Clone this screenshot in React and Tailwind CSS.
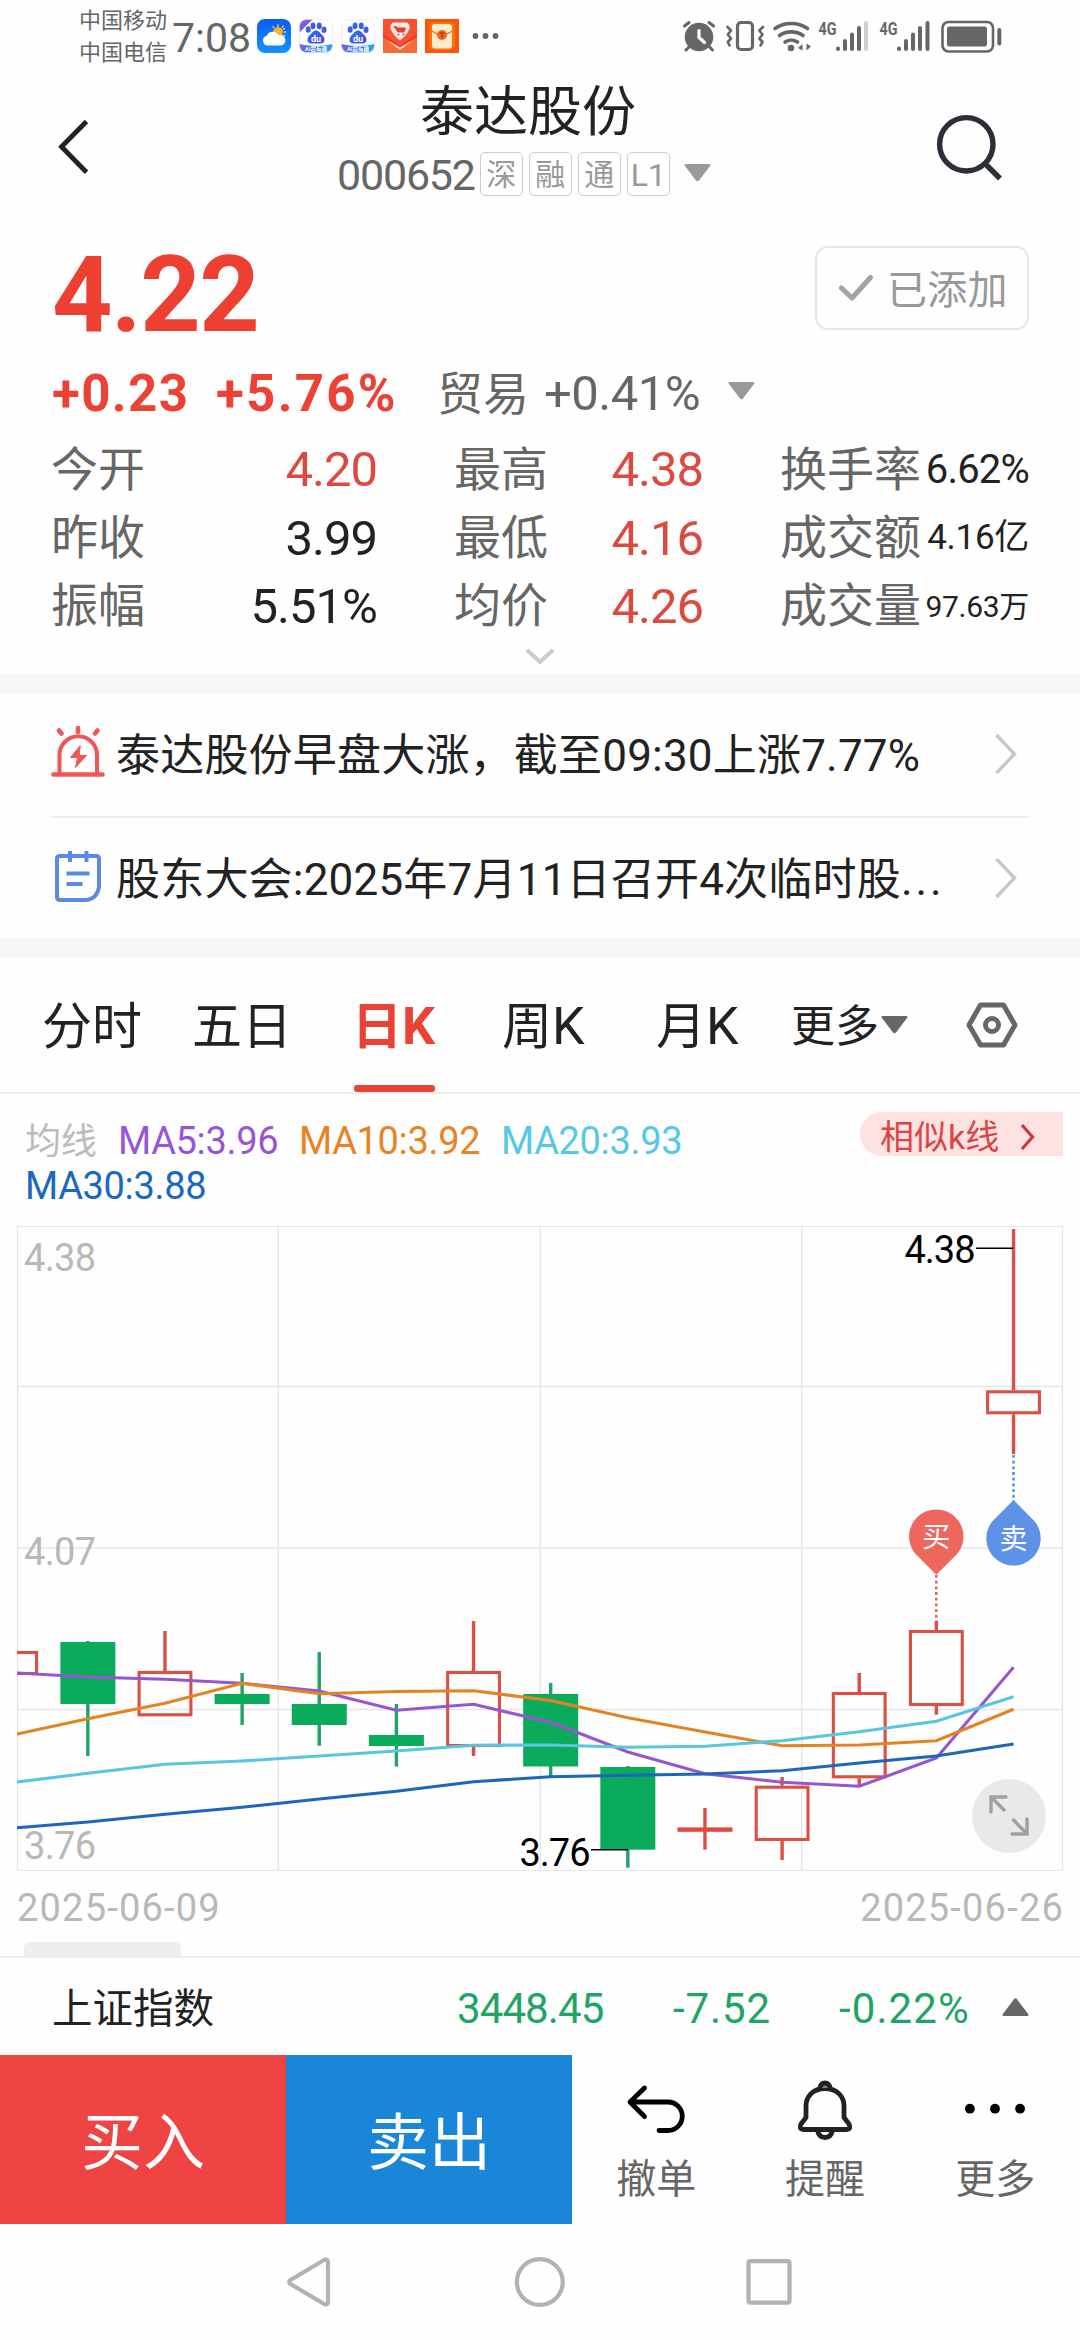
import React from "react";

function Triangle({ up = false, className = "" }) {
  return (
    <svg width="27" height="18" viewBox="0 0 27 18" className={`shrink-0 ${className}`} fill="currentColor">
      {up ? <path d="M12 1.2Q13.5-.6 15 1.2L26.5 16.4Q27 18 25 18H2Q0 18 .5 16.4Z" /> : <path d="M2 0H25Q27 0 26.4 1.6L15 16.6Q13.500 18 12 16.600L.6 1.600Q0 0 2 0Z" />}
    </svg>
  );
}

function BaiduIcon({ id, badge }) {
  return (
    <svg width="34" height="34" viewBox="0 0 34 34" className="shrink-0">
      <defs>
        <linearGradient id={`paw${id}`} x1="0" y1="0" x2="1" y2="1">
          <stop offset="0" stopColor="#1f7df2" />
          <stop offset="1" stopColor="#5a3fd8" />
        </linearGradient>
        <linearGradient id={`foot${id}`} x1="0" y1="0" x2="1" y2="0">
          <stop offset="0" stopColor="#7a5cf0" />
          <stop offset="0.5" stopColor="#2b7bf0" />
          <stop offset="1" stopColor="#1fa9f5" />
        </linearGradient>
        <clipPath id={`clip${id}`}>
          <rect x="0.5" y="0.5" width="33" height="33" rx="7" />
        </clipPath>
      </defs>
      <g clipPath={`url(#clip${id})`}>
        <rect width="34" height="34" fill="#fff" />
        <path d="M0 25Q17 29 34 25V34H0Z" fill={`url(#foot${id})`} />
        {badge && <path d="M0 0H14L0 14Z" fill="#7c5be8" />}
        <g fill={`url(#paw${id})`}>
          <ellipse cx="9.200" cy="10.500" rx="2.500" ry="3.200" />
          <ellipse cx="14" cy="6.800" rx="2.500" ry="3.400" />
          <ellipse cx="20.200" cy="6.800" rx="2.500" ry="3.400" />
          <ellipse cx="25" cy="10.800" rx="2.500" ry="3.200" />
          <path d="M17 11.500C20 11.500 21 14 23.200 16C26.500 19 26.500 24.500 21.500 24.500H12.500C7.500 24.500 7.500 19 10.800 16C13 14 14 11.500 17 11.500Z" />
        </g>
        <text x="17" y="22.500" textAnchor="middle" fontSize="9" fontWeight="700" fill="#fff">du</text>
        <text x="17" y="32" textAnchor="middle" fontSize="5.500" fontWeight="700" fill="#fff">AI超有趣</text>
      </g>
      <rect x="0.5" y="0.5" width="33" height="33" rx="7" fill="none" stroke="#dfe3ea" strokeWidth="0.600" />
    </svg>
  );
}

function StatusBar() {
  return (
    <div className="flex h-[72px] text-[#666]">
      <div className="ml-[79px] w-[93px] pt-[5px] text-[22px] leading-[32px]">
        <div>中国移动</div>
        <div>中国电信</div>
      </div>
      <div className="w-[85px] pt-[18px] text-[41px] leading-[40px]">7:08</div>
      <div className="flex h-[72px] gap-2 pt-[19px]">
        <svg width="34" height="34" viewBox="0 0 34 34">
          <defs>
            <linearGradient id="sky" x1="0" y1="0" x2="0" y2="1">
              <stop offset="0" stopColor="#0a5cf5" />
              <stop offset="1" stopColor="#1592ff" />
            </linearGradient>
          </defs>
          <rect width="34" height="34" rx="8" fill="url(#sky)" />
          <g stroke="#ffd36b" strokeWidth="1.300" strokeLinecap="round">
            <path d="M21 6V7.500M26 7L25.200 8.500M28.700 13H27.200M16 7.500L16.900 8.800M27.500 9.500L26.300 10.300M28 17L26.700 16.300" />
          </g>
          <circle cx="21" cy="13" r="4.800" fill="#ffb61d" />
          <path d="M10.500 26.500A5 5 0 0 1 9.800 16.700A6.500 6.500 0 0 1 21.500 16.200A5.300 5.300 0 1 1 22.500 26.500Z" fill="#fff" />
        </svg>
        <BaiduIcon id="a" badge />
        <BaiduIcon id="b" />
        <svg width="34" height="34" viewBox="0 0 34 34">
          <rect width="34" height="34" fill="#f23a22" />
          <path d="M0 0H34V15L17 27L0 15Z" fill="#f9502f" />
          <path d="M0 18L17 29L34 18V34H0Z" fill="#f26d3a" />
          <path d="M4 21L17 28.500L30 21L17 31Z" fill="#ffe2da" />
          <path d="M10 3.500H24Q27.500 6 26.500 10Q24 16 17 21.500Q10 16 7.500 10Q6.500 6 10 3.500Z" fill="#ffe9e4" />
          <path d="M11 7.500H13L14 9H22.500L21 13H15Z" fill="#e2402c" stroke="#e2402c" strokeWidth="1" />
          <circle cx="15.500" cy="15.500" r="1" fill="#e2402c" />
          <circle cx="20.500" cy="15.500" r="1" fill="#e2402c" />
        </svg>
        <svg width="34" height="34" viewBox="0 0 34 34">
          <rect width="34" height="34" fill="#fb5607" />
          <rect x="4" y="3" width="26" height="28" rx="5" fill="#ff8a1a" opacity="0.5" />
          <rect x="7" y="5" width="20" height="24.500" rx="3" fill="#ffeccb" />
          <path d="M7 12Q11 15.500 17 15.500Q23 15.500 27 12" fill="none" stroke="#ef6a20" strokeWidth="1.200" />
          <circle cx="17" cy="16" r="5" fill="#f0641f" />
          <path d="M14.800 14H19.200M17 14V19" stroke="#b93a10" strokeWidth="1.400" />
        </svg>
      </div>
      <svg width="30" height="72" viewBox="0 0 30 72" className="ml-[12px]" fill="#666">
        <circle cx="4.500" cy="36" r="2.900" />
        <circle cx="14.500" cy="36" r="2.900" />
        <circle cx="24.500" cy="36" r="2.900" />
      </svg>
      <svg width="320" height="48" viewBox="683 12 320 48" className="mt-[12px] ml-[182px]" fill="none" stroke="#666" strokeLinecap="round">
        {/* alarm clock */}
        <circle cx="699" cy="37" r="14.300" fill="#666" stroke="none" />
        <path d="M684.500 26L689 22.500M713.500 26L709 22.500M686 50L689 47M712.500 50L709.500 47" strokeWidth="3" />
        <path d="M699 30.500V37.500L704.500 42.500" stroke="#fff" strokeWidth="3.200" />
        {/* vibrate */}
        <rect x="737.500" y="22.500" width="15" height="27" rx="3.500" strokeWidth="3.200" />
        <path d="M727.500 27L731 30.500L727.800 34.500L731 38.500L727.800 42L729.500 45.500M763 27L759.300 30.500L762.500 34.500L759.300 38.500L762.500 42L760.500 45.500" strokeWidth="2.600" strokeLinejoin="round" />
        {/* wifi */}
        <path d="M775 28.500A25 21 0 0 1 807.500 28.500M779.500 35.500A18 15 0 0 1 803 35.500M785 42A10 8 0 0 1 797.500 42" strokeWidth="3.600" />
        <circle cx="791" cy="48" r="3.300" fill="#666" stroke="none" />
        <path d="M802.500 44V50.500L798 48Z M806.500 50.500V43.500L811 46.500Z" fill="#666" stroke="none" />
        {/* signal strength */}
        <g strokeWidth="4">
          <path d="M838 48.500V49M845 41V49M852 34.500V49M859 28V49" />
          <path d="M866 23V49" stroke="#d0d0d0" />
          <path d="M899 48.500V49M906 41V49M913 34.500V49M920 28V49M927.500 23V49" />
        </g>
        <text x="818.500" y="34.500" fontSize="18" fontWeight="700" fill="#666" stroke="none" textLength="18" lengthAdjust="spacingAndGlyphs">4G</text>
        <text x="879.500" y="34.500" fontSize="18" fontWeight="700" fill="#666" stroke="none" textLength="18" lengthAdjust="spacingAndGlyphs">4G</text>
        {/* battery */}
        <rect x="942.500" y="22" width="50.500" height="29.500" rx="6" strokeWidth="2.600" />
        <rect x="947" y="26.500" width="40" height="20" rx="2.500" fill="#666" stroke="none" />
        <path d="M999.300 30V43.500" strokeWidth="4" />
      </svg>
    </div>
  );
}

function Header() {
  return (
    <div className="flex h-[150px]">
      <svg width="40" height="60" viewBox="55 117 40 60" className="mt-[45px] ml-[55px] shrink-0" fill="none" stroke="#222" strokeWidth="4.800">
        <path d="M86.500 121.500L61.500 146.700L86.500 172.200" />
      </svg>
      <div className="ml-[241px] w-[382px] shrink-0">
        <div className="mt-[11px] ml-[84px] text-[54px] leading-[60px] text-[#222]">泰达股份</div>
        <div className="flex items-center gap-[5.500px] pt-[9px] text-[#999]">
          <span className="w-[138px] pt-[2px] pl-[1px] text-[43px] leading-[42px] tracking-[-1.200px] text-[#666]">000652</span>
          {["深", "融", "通", "L1"].map((t) => (
            <span
              key={t}
              className={`flex h-[44px] w-[43.500px] shrink-0 items-center justify-center rounded-[5px] border-[1.500px] border-[#ccc] pt-[1px] leading-none ${t === "L1" ? "text-[32px]" : "text-[30px]"}`}
            >
              {t}
            </span>
          ))}
          <Triangle className="-mt-[3px] ml-[8px]" />
        </div>
      </div>
      <svg width="72" height="72" viewBox="933 110 72 72" className="mt-[38px] ml-[215px] shrink-0" fill="none" stroke="#2b2f38" strokeWidth="5.400">
        <circle cx="966.300" cy="144.300" r="26.700" />
        <path d="M985 163.500L1000 178.500" />
      </svg>
    </div>
  );
}

const STATS = [
  ["今开", "4.20", "最高", "4.38", "换手率", "6.62%", "text-[#dc4a3f]", "text-[40px] tracking-[-0.800px]"],
  ["昨收", "3.99", "最低", "4.16", "成交额", "4.16亿", "text-[#222]", "text-[35px] tracking-[-0.300px]"],
  ["振幅", "5.51%", "均价", "4.26", "成交量", "97.63万", "text-[#222]", "text-[30px] tracking-[-0.300px]"],
];

function Quote() {
  return (
    <div className="h-[451px] pr-[51px] pl-[52px]">
      <div className="flex h-[138px] justify-between">
        <div className="pt-[20px] text-[105.500px] leading-[106px] font-bold tracking-[-1.500px] text-[#ed4033]">4.22</div>
        <div className="mt-[24px] flex h-[84px] w-[214px] items-center rounded-[13px] border-2 border-[#e5e5e5] pl-[21px] text-[40px] text-[#999]">
          <svg width="36" height="28" viewBox="0 0 36 28" className="mr-[13px]" fill="none" stroke="#a3a3a3" strokeWidth="5" strokeLinecap="round" strokeLinejoin="round">
            <path d="M3.500 14L14 24L32.500 3.500" />
          </svg>
          <span className="pt-[5px] leading-none tracking-[0.300px] whitespace-nowrap">已添加</span>
        </div>
      </div>
      <div className="flex h-[68px] items-center whitespace-nowrap text-[#666]">
        <span className="w-[164px] text-[51px] font-bold tracking-[1.400px] text-[#ec4236]">+0.23</span>
        <span className="w-[221px] text-[51px] font-bold tracking-[2.300px] text-[#ec4236]">+5.76%</span>
        <span className="w-[107px] text-[46px]">贸易</span>
        <span className="w-[184px] text-[49px] tracking-[-0.500px]">+0.41%</span>
        <Triangle className="-mt-[6px] text-[#999]" />
      </div>
      <div className="grid auto-rows-[68.200px] pt-[8px]">
        {STATS.map(([a, av, b, bv, c, cv, color, size]) => (
          <div key={a} className="flex items-center whitespace-nowrap text-[#666]">
            <span className="-ml-[1px] w-[101px] text-[47px]">{a}</span>
            <span className={`w-[225px] text-right text-[49px] tracking-[-1px] ${color}`}>{av}</span>
            <span className="w-[100px] pl-[77px] text-[47px]">{b}</span>
            <span className="w-[226px] text-right text-[49px] tracking-[-1px] text-[#dc4a3f]">{bv}</span>
            <span className="ml-[77px] text-[47px]">{c}</span>
            <span className={`ml-auto text-right text-[#222] ${size}`}>{cv}</span>
          </div>
        ))}
      </div>
      <svg width="30" height="18" viewBox="0 0 30 18" className="mt-[7px] ml-[473px]" fill="none" stroke="#ccc" strokeWidth="4">
        <path d="M2 2L15 14L28 2" />
      </svg>
    </div>
  );
}

function Chevron() {
  return (
    <svg width="24" height="42" viewBox="0 0 24 42" className="mr-[11px] ml-auto shrink-0" fill="none" stroke="#c8c8c8" strokeWidth="3.400">
      <path d="M2.500 2L20.500 21L2.500 40" />
    </svg>
  );
}

function News() {
  return (
    <div className="px-[51px] text-[44px] whitespace-nowrap text-[#222]">
      <div className="flex h-[125px] items-center border-b-2 border-[#eee] pb-[1px]">
        <svg width="54" height="54" viewBox="51 726 54 54" className="-mt-[4px] shrink-0" fill="none" stroke="#f05654" strokeWidth="4" strokeLinecap="round">
          <path d="M53.500 775.500H102.500" strokeWidth="4.600" />
          <path d="M59.500 774V756A18.500 18.500 0 0 1 97 756V774" />
          <path d="M78 729V733M59 731.500L61.500 734.500M97.500 731.500L95 734.500" strokeWidth="4.600" />
          <path d="M80 747L70.500 758.500H77.500L75.500 768.500L86.500 756.500H79.500Z" fill="#f05654" strokeWidth="1" />
        </svg>
        <span className="ml-[11px] pt-[4px] tracking-[0.200px]">泰达股份早盘大涨，截至09:30上涨7.77%</span>
        <Chevron />
      </div>
      <div className="flex h-[119px] items-center">
        <svg width="54" height="54" viewBox="51 850 54 54" className="-mt-[4px] shrink-0" fill="none" stroke="#5a8ae6" strokeWidth="4">
          <path d="M60 857H96Q99 857 99 860V888Q97 900 86 901H60Q57 901 57 898V860Q57 857 60 857Z" />
          <path d="M70 852V863M86.500 852V863M66.500 874.500H89.500M66.500 885H82.500" />
        </svg>
        <span className="ml-[11px] pt-[4px] tracking-[0.200px]">
          股东大会:2025年7月11日召开4次临时股<span className="tracking-[3px]">...</span>
        </span>
        <Chevron />
      </div>
    </div>
  );
}

function Tabs() {
  return (
    <div className="flex h-[137px] items-center border-b-2 border-[#eee] pl-[42px] text-[50px] whitespace-nowrap text-[#222]">
      <span className="w-[150px] pt-[5px]">分时</span>
      <span className="w-[160px] pt-[5px]">五日</span>
      <span className="relative flex h-[135px] w-[150px] items-center pt-[5px] font-bold text-[#ea4335]">
        日<span className="text-[52px]">K</span>
        <span className="absolute bottom-0 left-[2px] h-[7px] w-[81px] rounded-[3px] bg-[#ea4335]" />
      </span>
      <span className="w-[154px] pt-[5px]">周<span className="text-[52px]">K</span></span>
      <span className="w-[135px] pt-[5px]">月<span className="text-[52px]">K</span></span>
      <span className="pt-[4px] text-[44px]">更多</span>
      <Triangle className="ml-[2px] text-[#666]" />
      <svg width="52" height="46" viewBox="0 0 52 46" className="ml-[58px]" fill="none" stroke="#666" strokeWidth="5" strokeLinejoin="round">
        <path d="M14.500 3H37.500L49 23L37.500 43H14.500L3 23Z" />
        <circle cx="26" cy="23" r="6.500" />
      </svg>
    </div>
  );
}

function Averages() {
  return (
    <div className="flex h-[116px] pl-[25px] text-[38px] leading-[44px] tracking-[-0.350px] whitespace-nowrap">
      <div className="w-[835px] pt-[25px]">
        <div className="flex">
          <span className="w-[93px] pt-[1px] text-[36px] text-[#bbb]">均线</span>
          <span className="w-[181px] text-[#9656d6]">MA5:3.96</span>
          <span className="w-[202px] text-[#e98322]">MA10:3.92</span>
          <span className="text-[#56c8e4]">MA20:3.93</span>
        </div>
        <div className="text-[#1b68c2]">MA30:3.88</div>
      </div>
      <div className="mt-[18px] flex h-[44px] w-[203px] items-center rounded-l-full bg-[#fee1e1] pl-[20px] text-[34px] tracking-normal text-[#d94545]">
        <span className="pt-[5px]">相似k线</span>
        <svg width="16" height="28" viewBox="0 0 16 28" className="mt-[6px] ml-[21px]" fill="none" stroke="#c93a3a" strokeWidth="3.200">
          <path d="M2 2L12.500 14L2 26" />
        </svg>
      </div>
    </div>
  );
}

const X0 = 10.7;
const STEP = 77.14;
const HALF = 27.5;
const RED = "#da5044";
const GREEN = "#0bab5c";

// [direction, high, bodyTop, bodyBottom, low] in chart pixels
const CANDLES = [
  ["up", 1651, 1651, 1675, 1675],
  ["down", 1641, 1642, 1704, 1756],
  ["up", 1631, 1671, 1716.3, 1716],
  ["down", 1673, 1694, 1704, 1725],
  ["down", 1652, 1704, 1725, 1745.7],
  ["down", 1704, 1735, 1746, 1766.5],
  ["up", 1621, 1671, 1747, 1756],
  ["down", 1683, 1694, 1766.5, 1776],
  ["down", 1766, 1767, 1849.7, 1867.7],
  ["up", 1808, 1827.4, 1831.8, 1849.7],
  ["up", 1777, 1785.7, 1841, 1860],
  ["up", 1673, 1692, 1778.3, 1785.3],
  ["up", 1621, 1630, 1706, 1714.7],
  ["up", 1229, 1390.3, 1414.3, 1454],
];

const LINES = [
  ["#9656d0", [1673, 1677, 1679.3, 1683.3, 1691, 1710.3, 1704.3, 1722.3, 1752, 1773.7, 1782.3, 1786.3, 1758, 1667.3]],
  ["#e58323", [1734, 1718.7, 1703.3, 1683.3, 1693.7, 1691.5, 1690.7, 1700.5, 1717.7, 1732, 1745.7, 1745, 1740.7, 1709.3]],
  ["#59c6e0", [1782, 1773.3, 1764.3, 1761, 1756, 1751, 1745.3, 1745, 1747.3, 1746.3, 1740.7, 1731.7, 1721.3, 1696.7]],
  ["#1c66bd", [1827.7, 1822, 1814.3, 1807.3, 1799, 1791.3, 1781.7, 1776.8, 1775.3, 1774, 1770.7, 1763, 1756, 1744]],
];

function Candle({ i, data: [dir, high, top, bottom, low] }) {
  const x = X0 + i * STEP;
  if (dir === "down") {
    return (
      <g fill={GREEN}>
        <rect x={x - 1.7} y={high} width="3.400" height={low - high} fill="#22a266" />
        <rect x={x - HALF} y={top} width={HALF * 2} height={bottom - top} />
      </g>
    );
  }
  if (bottom - top < 8) {
    return (
      <g fill={RED}>
        <rect x={x - 1.7} y={high} width="3.400" height={low - high} />
        <rect x={x - HALF} y={top} width={HALF * 2} height={bottom - top} fill="#e4483c" />
      </g>
    );
  }
  return (
    <g fill={RED}>
      <rect x={x - 1.7} y={high} width="3.400" height={top - high} />
      <rect x={x - 1.7} y={bottom} width="3.400" height={Math.max(0, low - bottom)} />
      <rect x={x - HALF + 1.6} y={top + 1.5} width={HALF * 2 - 3.2} height={bottom - top - 3} fill="none" stroke={RED} strokeWidth="3.100" />
    </g>
  );
}

function Chart() {
  return (
    <svg width="1080" height="670" viewBox="0 1210 1080 670" className="block">
      <defs>
        <clipPath id="plot">
          <rect x="17" y="1226" width="1046" height="645" />
        </clipPath>
      </defs>
      <g stroke="#e6e6e6" strokeWidth="1.500">
        <path d="M17.500 1226.500H1062.500M17.500 1870.500H1062.500M17.500 1226V1870M1062.500 1226V1870" strokeWidth="1.200" />
        <path d="M18 1386.500H1062M18 1548H1062M18 1709.500H1062M278.300 1227V1870M540.300 1227V1870M801.700 1227V1870" />
      </g>
      <g clipPath="url(#plot)">
        {CANDLES.map((c, i) => (
          <Candle key={i} i={i} data={c} />
        ))}
        {LINES.map(([color, ys]) => (
          <polyline
            key={color}
            fill="none"
            stroke={color}
            strokeWidth="3.100"
            points={ys.map((y, i) => `${i === 0 ? 17 : X0 + i * STEP},${y}`).join(" ")}
          />
        ))}
      </g>
      <g fontSize="38" fill="#b8b8b8">
        <text x="24" y="1270.500" textLength="72">4.38</text>
        <text x="24" y="1564.500" textLength="72">4.07</text>
        <text x="24" y="1858.500" textLength="72">3.76</text>
      </g>
      <g fontSize="38" fill="#000">
        <text x="904.500" y="1263.300" textLength="71">4.38</text>
        <text x="519.500" y="1865.500" textLength="71">3.76</text>
      </g>
      <path d="M976 1248.200H1013M591 1849.800H628" stroke="#000" strokeWidth="1.600" />
      <path d="M1013.500 1455V1502" stroke="#5b8fd8" strokeWidth="2.600" strokeDasharray="2.800 2.900" />
      <path d="M936.300 1575V1621" stroke="#d46a63" strokeWidth="2.600" strokeDasharray="2.800 2.900" />
      <path d="M936.300 1574.700L915 1553.500A27.200 27.200 0 1 1 957.600 1553.500Z" fill="#ef665d" />
      <path d="M1013.500 1500L992.200 1521.500A27.200 27.200 0 1 0 1034.800 1521.500Z" fill="#5d92e6" />
      <g fontSize="28" fill="#fff" textAnchor="middle">
        <text x="936.300" y="1547">买</text>
        <text x="1013.500" y="1549">卖</text>
      </g>
      <circle cx="1009" cy="1816" r="37" fill="#e9e9e9" />
      <path d="M1006 1797H991V1812M991 1797L1004 1810M1012 1834H1027V1819M1027 1834L1013.500 1820" fill="none" stroke="#a0a0a0" strokeWidth="3.400" strokeLinecap="round" />
    </svg>
  );
}

function Bottom() {
  return (
    <>
      <div className="flex h-[62px] justify-between pt-[6px] pr-[16px] pl-[17px] text-[38px] leading-[44px] tracking-[1.200px] text-[#b8b8b8]">
        <span>2025-06-09</span>
        <span>2025-06-26</span>
      </div>
      <div className="h-[16px] border-b-2 border-[#eee] pl-[24px]">
        <div className="h-[14px] w-[157px] rounded-t-[6px] bg-[#eee]" />
      </div>
      <div className="flex h-[97px] items-center pl-[52px] text-[42px] whitespace-nowrap text-[#1ea566]">
        <span className="w-[405px] pt-[5px] text-[40.500px] text-[#222]">上证指数</span>
        <span className="w-[216px] pt-[4px] tracking-[-0.900px]">3448.45</span>
        <span className="w-[166px] pt-[4px] tracking-[0.900px]">-7.52</span>
        <span className="w-[163px] pt-[4px] tracking-[1.100px]">-0.22%</span>
        <Triangle up className="text-[#666]" />
      </div>
      <div className="flex h-[169px] text-[#666]">
        <div className="flex w-[286px] items-center justify-center bg-[#ee4443] pt-[8px] text-[62px] text-white">买入</div>
        <div className="flex w-[286px] items-center justify-center bg-[#1a86d7] pt-[8px] text-[62px] text-white">卖出</div>
        <div className="grid flex-1 grid-cols-3 text-[40px] leading-[50px]">
          <div className="flex flex-col items-center pt-[21px] pr-[1px]">
            <svg width="60" height="66" viewBox="626 2076 60 66" className="mb-[13px]" fill="none" stroke="#000" strokeWidth="4.800" strokeLinecap="round" strokeLinejoin="round">
              <path d="M644.500 2088L630 2102L644.500 2116.500M631 2102H668A14 14 0 0 1 668 2130.500H659" />
            </svg>
            撤单
          </div>
          <div className="flex flex-col items-center pt-[21px] pr-[2px]">
            <svg width="60" height="66" viewBox="794.500 2076 60 66" className="mb-[13px]" fill="none" stroke="#222" strokeWidth="4.800" strokeLinejoin="round">
              <path d="M824.500 2088.500C812 2088.500 805.500 2097 805.500 2106V2117.500L800.500 2124Q798 2129.500 803 2129.500H846Q851 2129.500 848.500 2124L843.500 2117.500V2106C843.500 2097 837 2088.500 824.500 2088.500Z" />
              <path d="M819.500 2088A5 5 0 1 1 829.500 2088" fill="#888" />
              <path d="M817 2130.500Q818.500 2137.500 824.500 2137.500Q830.500 2137.500 832 2130.500" />
            </svg>
            提醒
          </div>
          <div className="flex flex-col items-center pt-[21px]">
            <svg width="60" height="66" viewBox="0 0 60 66" className="mb-[13px]" fill="#000">
              <circle cx="4.900" cy="32.700" r="4.900" />
              <circle cx="30" cy="32.700" r="4.900" />
              <circle cx="55.100" cy="32.700" r="4.900" />
            </svg>
            更多
          </div>
        </div>
      </div>
      <div className="flex h-[116px] items-center justify-center">
        <svg width="506" height="54" viewBox="287 2255 506 54" fill="none" stroke="#b2b2b2" strokeWidth="4.200" strokeLinejoin="round">
          <path d="M324.500 2259.800L290.500 2280Q288 2282 290.500 2284L324.500 2304.300Q328 2305 328 2302V2262Q328 2259 324.500 2259.800Z" />
          <circle cx="539.800" cy="2282" r="22.900" />
          <rect x="748.500" y="2261.200" width="41" height="41.500" rx="2" />
        </svg>
      </div>
    </>
  );
}

export default function App() {
  return (
    <div className="h-[2340px] w-[1080px] overflow-hidden bg-[#fefefe] font-[Roboto,'Noto_Sans_CJK_SC',sans-serif]">
      <StatusBar />
      <Header />
      <Quote />
      <div className="h-[20px] bg-[#f6f7f9]" />
      <News />
      <div className="h-[20px] bg-[#f6f7f9]" />
      <Tabs />
      <Averages />
      <Chart />
      <Bottom />
    </div>
  );
}
